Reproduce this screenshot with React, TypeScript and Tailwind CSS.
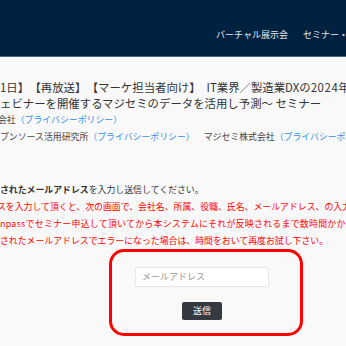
export default function App() {
  return (
    <div className="w-[346px] h-[346px] overflow-hidden bg-[#f9f9f9] font-['Noto_Sans_CJK_JP','Noto_Sans',sans-serif] text-[#333]">
      <header className="h-[57px] bg-[#00213f] border-b border-[#4a6583] pt-[29px] pl-[216px] flex gap-[15px] whitespace-nowrap text-[9px] leading-[12px] text-[#e6ebf0]">
        <span>バーチャル展示会</span>
        <span>セミナー・</span>
      </header>
      <main className="pt-[23px] whitespace-nowrap">
        <div className="text-[11.4px] leading-[15.5px] text-[#333]">
          <div>
            1日】<span className="ml-[6px]">【再放送】</span>
            <span className="ml-[6px]">【マーケ担当者向け】</span>
            <span className="ml-[6px]">IT業界／製造業DXの<span className="tracking-[0.6px]">2024</span>年</span>
          </div>
          <div>ェビナーを開催するマジセミのデータを活用し予測～ セミナー</div>
        </div>
        <div className="text-[8.9px] leading-[17px] text-[#444]">
          <div className="-ml-[2px]">
            会社<span className="text-[#338fe6]">（プライバシーポリシー）</span>
          </div>
          <div className="leading-[17.5px]">
            プンソース活用研究所<span className="text-[#338fe6]">（プライバシーポリシー）</span>
            <span className="ml-[9px]">マジセミ株式会社</span>
            <span className="text-[#338fe6]">（プライバシーポリシー）</span>
          </div>
        </div>
        <div className="mt-[35px] text-[8.9px] leading-[17px]">
          <div className="text-[#333]">
            <span className="font-bold">されたメールアドレス</span>を入力し送信してください。
          </div>
          <div className="text-[#ff0000] -ml-[3px]">
            スを入力して頂くと、次の画面で、会社名、所属、役職、氏名、メールアドレス、の入力
          </div>
          <div className="text-[#ff0000] tracking-[0.3px]">
            npassでセミナー申込して頂いてから本システムにそれが反映されるまで数時間かかり
          </div>
          <div className="text-[#ff0000]">
            されたメールアドレスでエラーになった場合は、時間をおいて再度お試し下さい。
          </div>
        </div>
        <div className="ml-[109px] w-[194px] h-[87px] border-[3px] border-[#ff0000] rounded-[15px] pt-[15px] pl-[23px]">
          <div className="w-[134px] flex flex-col items-center">
            <div className="w-[134px] h-[20px] bg-white border border-[#e6e6e6] rounded-[2px] pl-[6px] flex items-center text-[9px] text-[#9a9a9a]">
              メールアドレス
            </div>
            <button className="mt-[15px] w-[40px] h-[18px] bg-[#343a40] rounded-[2px] text-white text-[9px] leading-[18px] flex items-center justify-center">
              送信
            </button>
          </div>
        </div>
      </main>
    </div>
  );
}
